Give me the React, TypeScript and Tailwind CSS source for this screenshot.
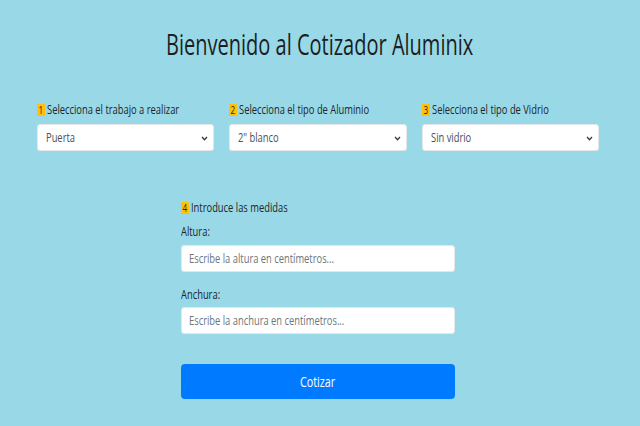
import React from "react";

const font = { fontFamily: '"Open Sans", "Liberation Sans", sans-serif' };

function T({ children, className = "" }: { children: React.ReactNode; className?: string }) {
  return <span className={"inline-block origin-left scale-x-[0.72] whitespace-nowrap " + className}>{children}</span>;
}

function Badge({ n }: { n: string }) {
  return (
    <span className="inline-flex h-[12px] w-[8px] shrink-0 items-center justify-center rounded-[1px] bg-[#ffc107] text-[10px] leading-none text-[#212529]">
      <span className="inline-block scale-x-[0.8]">{n}</span>
    </span>
  );
}

function Chevron() {
  return (
    <svg width="7" height="5" viewBox="0 0 7 5" className="absolute right-[5px] top-[11px]">
      <path d="M1 1 L3.5 3.8 L6 1" fill="none" stroke="#343a40" strokeWidth="1.3" />
    </svg>
  );
}

function Label({ n, text }: { n: string; text: string }) {
  return (
    <div className="flex h-[14px] items-center gap-[2px] text-[13px] text-[#212529]">
      <Badge n={n} />
      <T>{text}</T>
    </div>
  );
}

function SelectBox({ label, n, value }: { label: string; n: string; value: string }) {
  return (
    <div className="flex flex-col">
      <Label n={n} text={label} />
      <div className="relative mt-[7px] flex h-[27px] items-center rounded-[3px] border border-[#e3e7ea] bg-white pl-[8px] text-[13px] text-[#495057]">
        <T>{value}</T>
        <Chevron />
      </div>
    </div>
  );
}

function Field({ placeholder }: { placeholder: string }) {
  return (
    <div className="flex h-[27px] items-center rounded-[3px] border border-[#e3e7ea] bg-white pl-[7px] text-[13px] text-[#6c757d]">
      <T>{placeholder}</T>
    </div>
  );
}

export default function App() {
  return (
    <div className="h-[426px] w-[640px] overflow-hidden bg-[#99d9e7]" style={font}>
      <div className="flex justify-center pt-[27px]">
        <span className="inline-block origin-center scale-x-[0.69] whitespace-nowrap text-[29px] font-medium leading-[34px] text-[#1c1f23]">
          Bienvenido al Cotizador Aluminix
        </span>
      </div>
      <div className="ml-[37px] mt-[42px] grid w-[562px] grid-cols-3 gap-x-[15px]">
        <SelectBox n="1" label="Selecciona el trabajo a realizar" value="Puerta" />
        <SelectBox n="2" label="Selecciona el tipo de Aluminio" value={'2" blanco'} />
        <SelectBox n="3" label="Selecciona el tipo de Vidrio" value="Sin vidrio" />
      </div>
      <div className="ml-[181px] mt-[50px] flex w-[274px] flex-col">
        <Label n="4" text="Introduce las medidas" />
        <div className="mt-[9px] h-[14px] text-[13px] leading-[14px] text-[#212529]">
          <T>Altura:</T>
        </div>
        <div className="mt-[7px]">
          <Field placeholder="Escribe la altura en centímetros..." />
        </div>
        <div className="mt-[15px] h-[14px] text-[13px] leading-[14px] text-[#212529]">
          <T>Anchura:</T>
        </div>
        <div className="mt-[6px]">
          <Field placeholder="Escribe la anchura en centímetros..." />
        </div>
        <button className="mt-[30px] flex h-[35px] items-center justify-center rounded-[4px] bg-[#007bff] text-[15px] text-white">
          <span className="inline-block scale-x-[0.72]">Cotizar</span>
        </button>
      </div>
    </div>
  );
}
